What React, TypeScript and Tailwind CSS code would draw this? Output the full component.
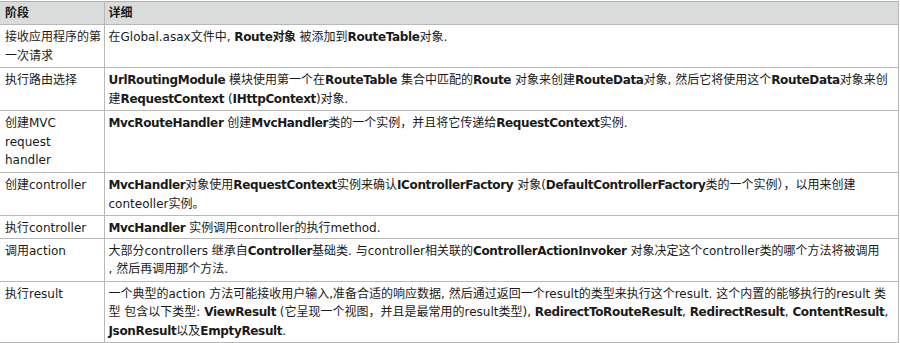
// MVC request pipeline table: stage / detail rows.

import type { ReactNode } from "react";

type Row = { stage: ReactNode; detail: ReactNode; h: string };

const B = ({ children }: { children: ReactNode }) => (
  <b className="font-bold tracking-[-0.35px]">{children}</b>
);

const rows: Row[] = [
  {
    h: "h-[43px]",
    stage: (<>接收应用程序的第<br />一次请求</>),
    detail: (<>在Global.asax文件中, <B>Route对象</B> 被添加到<B>RouteTable</B>对象.</>),
  },
  {
    h: "h-[43px]",
    stage: "执行路由选择",
    detail: (
      <>
        <B>UrlRoutingModule</B> 模块使用第一个在<B>RouteTable</B> 集合中匹配的<B>Route</B> 对象来创建<B>RouteData</B>对象, 然后它将使用这个<B>RouteData</B>对象来创
        <br />建<B>RequestContext</B> (<B>IHttpContext</B>)对象.
      </>
    ),
  },
  {
    h: "h-[62px]",
    stage: (<>创建MVC<br />request<br />handler</>),
    detail: (<><B>MvcRouteHandler</B> 创建<B>MvcHandler</B>类的一个实例，并且将它传递给<B>RequestContext</B>实例.</>),
  },
  {
    h: "h-[43px]",
    stage: "创建controller",
    detail: (
      <>
        <B>MvcHandler</B>对象使用<B>RequestContext</B>实例来确认<B>IControllerFactory</B> 对象(<B>DefaultControllerFactory</B>类的一个实例），以用来创建
        <br />conteoller实例。
      </>
    ),
  },
  {
    h: "h-[22px]",
    stage: "执行controller",
    detail: (<><B>MvcHandler</B> 实例调用controller的执行method.</>),
  },
  {
    h: "h-[43px]",
    stage: "调用action",
    detail: (
      <>
        大部分controllers 继承自<B>Controller</B>基础类. 与controller相关联的<B>ControllerActionInvoker</B> 对象决定这个controller类的哪个方法将被调用
        <br />, 然后再调用那个方法.
      </>
    ),
  },
  {
    h: "h-[61px]",
    stage: "执行result",
    detail: (
      <>
        一个典型的action 方法可能接收用户输入,准备合适的响应数据, 然后通过返回一个result的类型来执行这个result. 这个内置的能够执行的result 类
        <br />型 包含以下类型: <B>ViewResult</B> (它呈现一个视图，并且是最常用的result类型), <B>RedirectToRouteResult</B>, <B>RedirectResult</B>, <B>ContentResult</B>,
        <br /><B>JsonResult</B>以及<B>EmptyResult</B>.
      </>
    ),
  },
];

export default function App() {
  return (
    <div className="w-[900px] h-[343px] bg-white pt-px font-['DejaVu_Sans','Noto_Sans_CJK_SC',sans-serif] text-[12px] leading-[18.5px] text-[#1a1a1a]">
      <table className="w-[899px] border-collapse table-fixed">
        <colgroup>
          <col className="w-[104px]" />
          <col />
        </colgroup>
        <thead>
          <tr className="h-[23px] bg-[#d9dcdb] border-t border-t-[#a9b3bd] border-b border-b-[#b8b8b8]">
            <th className="px-[5px] text-left font-bold align-middle border-r border-r-[#b8b8b8]">阶段</th>
            <th className="px-[4px] text-left font-bold align-middle border-r border-r-[#b8b8b8]">详细</th>
          </tr>
        </thead>
        <tbody>
          {rows.map((r, i) => (
            <tr key={i} className={`${r.h} border-b border-b-[#b8b8b8]`}>
              <td className="px-[5px] pt-[3px] align-top whitespace-nowrap border-r border-r-[#b8b8b8]">{r.stage}</td>
              <td className="px-[4px] pt-[3px] align-top whitespace-nowrap border-r border-r-[#b8b8b8]">{r.detail}</td>
            </tr>
          ))}
        </tbody>
      </table>
    </div>
  );
}
